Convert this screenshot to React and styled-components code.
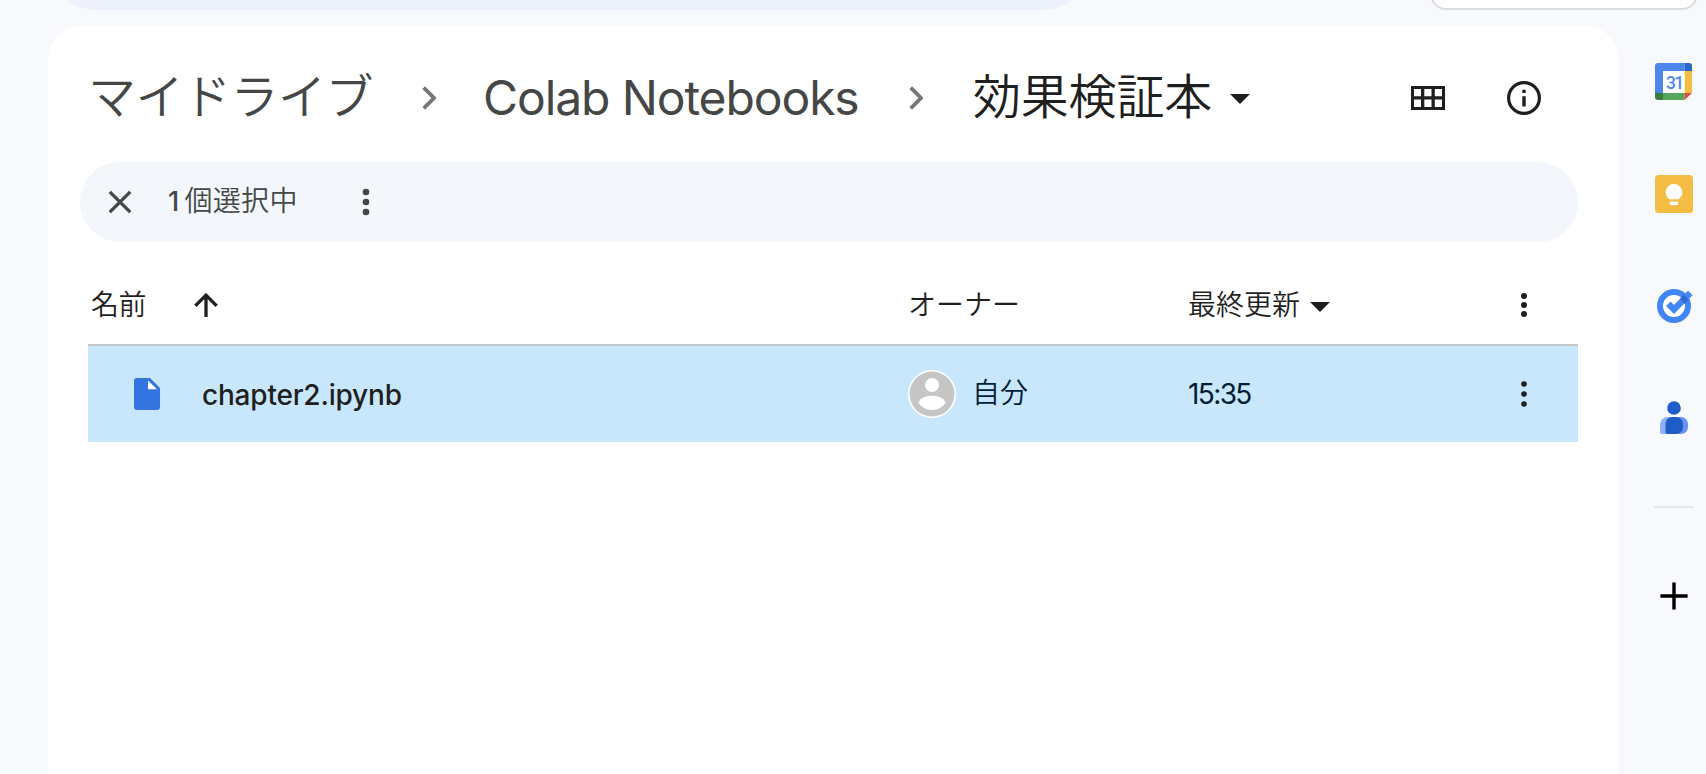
import React from "react";
import styled, { createGlobalStyle } from "styled-components";

const GlobalStyle = createGlobalStyle`
  * { box-sizing: border-box; }
  body {
    margin: 0;
    background: #f8f9fd;
    overflow: hidden;
    font-family: Inter, "Noto Sans CJK JP", sans-serif;
  }
  svg { display: block; flex: none; }
`;

const Page = styled.div`
  width: 1706px;
  height: 774px;
  display: flex;
  flex-direction: column;
  overflow: hidden;
  background: #f8f9fd;
`;

const TopBar = styled.header`
  height: 26px;
  flex: none;
  display: flex;
  align-items: flex-start;
  padding: 0 8px 0 48px;
  justify-content: space-between;
`;

const SearchBox = styled.div`
  width: 1043px;
  height: 96px;
  margin-top: -86px;
  border-radius: 48px;
  background: #edf1fb;
`;

const AccountBox = styled.div`
  width: 268px;
  height: 60px;
  margin-top: -50px;
  border-radius: 16px;
  border: 2px solid #dadce0;
  background: #fff;
`;

const Body = styled.div`
  flex: 1;
  display: flex;
  padding-left: 48px;
`;

const Panel = styled.main`
  width: 1570px;
  padding: 0 40px 0 32px;
  border-radius: 32px 32px 0 0;
  background: #fff;
`;

const Heading = styled.div`
  height: 136px;
  display: flex;
  align-items: center;
  padding: 8px 37px 0 8px;
`;

const Crumb = styled.span`
  width: ${(p) => p.$width}px;
  font-size: 48px;
  line-height: 64px;
  margin-top: ${(p) => p.$lift || 0}px;
  font-weight: ${(p) => p.$weight || 400};
  letter-spacing: ${(p) => p.$spacing || 0}px;
  white-space: nowrap;
  color: ${(p) => (p.$current ? "#1f1f1f" : "#444746")};
`;

const CrumbArrow = styled.span`
  width: 14px;
  margin: 0 ${(p) => p.$after}px 0 ${(p) => p.$before}px;
`;

const CaretSlot = styled.span`
  margin-left: ${(p) => p.$gap}px;
  padding-top: ${(p) => p.$drop}px;
`;

const Tools = styled.div`
  margin-left: auto;
  display: flex;
  align-items: center;
  gap: 62px;
`;

const SelectionBar = styled.div`
  height: 80px;
  display: flex;
  align-items: center;
  padding-left: 28px;
  border-radius: 40px;
  background: #f3f6fb;
  color: #444746;
`;

const SelectionText = styled.span`
  width: 130px;
  margin: -2px 64px 0 36px;
  font-size: 28px;
  line-height: 40px;
  font-weight: 350;
  letter-spacing: 0.3px;
  white-space: nowrap;
`;

const Count = styled.span`
  font-size: 27px;
  font-weight: 500;
  margin-right: 5px;
`;

const Table = styled.div`
  margin-left: 8px;
`;

const Row = styled.div`
  display: grid;
  grid-template-columns: 820px 280px 300px 1fr;
  align-items: center;
`;

const HeaderRow = styled(Row)`
  height: 104px;
  padding-top: 24px;
  border-bottom: 2px solid #c4c7c5;
  border-radius: 2px 2px 0 0;
  color: #1f1f1f;
`;

const FileRow = styled(Row)`
  height: 96px;
  background: #c8e7fd;
  color: #001d35;
`;

const Cell = styled.div`
  display: flex;
  align-items: center;
  padding-left: ${(p) => p.$indent || 0}px;
`;

const Label = styled.span`
  font-size: 28px;
  line-height: 40px;
  font-weight: 350;
  letter-spacing: ${(p) => p.$spacing || 0}px;
  white-space: nowrap;
`;

const SortArrow = styled.span`
  margin-left: 48px;
`;

const FileName = styled.span`
  margin: 1px 0 0 42px;
  font-size: 28px;
  line-height: 40px;
  font-weight: 500;
  letter-spacing: -0.2px;
  color: #1f1f1f;
`;

const Owner = styled(Label)`
  margin: -2px 0 0 16px;
`;

const Time = styled.span`
  font-size: 28px;
  line-height: 40px;
  letter-spacing: -1.6px;
`;

const SidePanel = styled.aside`
  width: 64px;
  margin-left: 24px;
  display: flex;
  flex-direction: column;
  align-items: center;
`;

const AppSlot = styled.div`
  width: 64px;
  height: 112px;
  display: flex;
  align-items: center;
  justify-content: center;
`;

const Divider = styled.div`
  width: 40px;
  height: 2px;
  margin: 32px 0;
  background: #e5e7ea;
`;

const Chevron = () => (
  <svg width="14" height="24" viewBox="0 0 14 24">
    <path d="M1.7 1.7 12 12 1.7 22.3" fill="none" stroke="#747775" strokeWidth="3.8" />
  </svg>
);

const Caret = () => (
  <svg width="20" height="10" viewBox="0 0 20 10">
    <path d="M0 0h20L10 10z" fill="#1f1f1f" />
  </svg>
);

const GridIcon = () => (
  <svg width="34" height="24" viewBox="0 0 34 24">
    <path
      fillRule="evenodd"
      fill="#1f1f1f"
      d="M0 0h34v24H0zM3 3v7.3h7V3zM13.3 3v7.3h7.2V3zM23.8 3v7.3H31V3zM3 13.6V21h7v-7.4zM13.3 13.6V21h7.2v-7.4zM23.8 13.6V21H31v-7.4z"
    />
  </svg>
);

const InfoIcon = () => (
  <svg width="34" height="34" viewBox="0 0 34 34">
    <circle cx="17" cy="17" r="15.4" fill="none" stroke="#1f1f1f" strokeWidth="3.2" />
    <path d="M15.3 8.7h3.4v3.4h-3.4zM15.3 15.3h3.4v10.2h-3.4z" fill="#1f1f1f" />
  </svg>
);

const CloseIcon = () => (
  <svg width="24" height="24" viewBox="0 0 24 24">
    <path d="M1.8 1.8 22.2 22.2M22.2 1.8 1.8 22.2" stroke="#444746" strokeWidth="3.3" />
  </svg>
);

const Dots = ({ color = "#1f1f1f", step = 10, r = 3 }) => (
  <svg width="8" height="30" viewBox="0 0 8 30" fill={color}>
    <circle cx="4" cy={15 - step} r={r} />
    <circle cx="4" cy="15" r={r} />
    <circle cx="4" cy={15 + step} r={r} />
  </svg>
);

const UpArrow = () => (
  <svg width="24" height="24" viewBox="0 0 24 24">
    <path d="M12 24V3M1.3 12.9 12 2.2l10.7 10.7" fill="none" stroke="#1f1f1f" strokeWidth="3.3" />
  </svg>
);

const FileIcon = () => (
  <svg width="26" height="32" viewBox="0 0 26 32">
    <path d="M3 0h13l10 10v19a3 3 0 0 1-3 3H3a3 3 0 0 1-3-3V3a3 3 0 0 1 3-3z" fill="#3474e0" />
    <path d="M14 2.6 23 11.3h-9z" fill="#fff" />
  </svg>
);

const Avatar = () => (
  <svg width="48" height="48" viewBox="0 0 48 48">
    <circle cx="24" cy="24" r="24" fill="#fff" />
    <circle cx="24" cy="24" r="22.5" fill="#c6c6c6" />
    <circle cx="24" cy="15" r="7" fill="#fff" />
    <path d="M10.5 32.5C12 28 18 25.7 24 25.7s12 2.3 13.5 6.8C35 37 30 40 24 40s-11-3-13.5-7.5z" fill="#fff" />
  </svg>
);

const CalendarText = styled.text`
  font-family: Roboto, sans-serif;
  font-size: 17.5px;
  font-weight: 500;
  letter-spacing: -1.6px;
`;

const CalendarIcon = () => (
  <svg width="38" height="38" viewBox="0 0 38 38">
    <path d="M3 0h26.5v8H8v22H0V3a3 3 0 0 1 3-3z" fill="#4f86ec" />
    <path d="M29.5 0H34a3 3 0 0 1 3 3v5h-7.5z" fill="#2c66cb" />
    <path d="M29.5 8H37v22h-7.5z" fill="#f2bd42" />
    <path d="M8 30h21.5v7H8z" fill="#58a55c" />
    <path d="M0 30h8v7H3a3 3 0 0 1-3-3z" fill="#3b7d3f" />
    <path d="M29.5 30H37l-7.5 7z" fill="#d95040" />
    <path d="M8 8h21.5v22H8z" fill="#fff" />
    <CalendarText x="10.9" y="25.5" fill="#4f86ec">31</CalendarText>
  </svg>
);

const KeepIcon = () => (
  <svg width="38" height="38" viewBox="0 0 38 38">
    <rect width="38" height="38" rx="3.5" fill="#f2bd42" />
    <path d="M19 9a8.2 8.2 0 0 1 5 14.7v.6H14v-.6A8.2 8.2 0 0 1 19 9zM14.8 26.500h8.400V30h-8.400z" fill="#fff" />
  </svg>
);

const TasksIcon = () => (
  <svg width="38" height="38" viewBox="0 0 38 38">
    <circle cx="19" cy="19" r="14" fill="#fff" stroke="#4285f4" strokeWidth="6" />
    <path
      d="M13.3 16.7 19 22.4 35.3 6.1"
      fill="none"
      stroke="#4285f4"
      strokeWidth="6.4"
    />
    <path d="M28.9 8a16 16 0 0 1 4.4 4.9l-3.800 3.800a13 13 0 0 0-4.600-4.700z" fill="#3367d6" />
  </svg>
);

const ContactsIcon = () => (
  <svg width="28" height="34" viewBox="0 0 28 34">
    <circle cx="14" cy="7" r="6.8" fill="#1f5cc8" />
    <path d="M8 16h6v17H2a2 2 0 0 1-2-2v-7a8 8 0 0 1 8-8z" fill="#8fb0fa" />
    <path d="M14 16h7a7 7 0 0 1 7 7v3a7 7 0 0 1-7 7h-7z" fill="#6993f6" />
    <path d="M12 16h4a7 7 0 0 1 7 7v3a7 7 0 0 1-7 7H7.5A2 2 0 0 1 5.5 31v-8.5A6.5 6.5 0 0 1 12 16z" fill="#1f5cc8" />
  </svg>
);

const PlusIcon = () => (
  <svg width="28" height="28" viewBox="0 0 28 28">
    <path d="M14 .4v27.2M.4 14h27.2" stroke="#000" strokeWidth="3.4" />
  </svg>
);

export default function App() {
  return (
    <Page>
      <GlobalStyle />
      <TopBar>
        <SearchBox />
        <AccountBox />
      </TopBar>
      <Body>
        <Panel>
          <Heading>
            <Crumb $width={288} $weight={350} $spacing={-0.5} $lift={-3}>マイドライブ</Crumb>
            <CrumbArrow $before={46} $after={47}><Chevron /></CrumbArrow>
            <Crumb $width={376} $spacing={-1.1} $lift={-1}>Colab Notebooks</Crumb>
            <CrumbArrow $before={50} $after={50}><Chevron /></CrumbArrow>
            <Crumb $width={240} $weight={350} $spacing={-0.2} $lift={-3} $current>効果検証本</Crumb>
            <CaretSlot $gap={17} $drop={2}><Caret /></CaretSlot>
            <Tools>
              <GridIcon />
              <InfoIcon />
            </Tools>
          </Heading>
          <SelectionBar>
            <CloseIcon />
            <SelectionText><Count>1</Count>個選択中</SelectionText>
            <Dots color="#444746" r={3.3} />
          </SelectionBar>
          <Table>
            <HeaderRow>
              <Cell $indent={3}>
                <Label $spacing={-0.5}>名前</Label>
                <SortArrow><UpArrow /></SortArrow>
              </Cell>
              <Cell><Label>オーナー</Label></Cell>
              <Cell>
                <Label>最終更新</Label>
                <CaretSlot $gap={10} $drop={4}><Caret /></CaretSlot>
              </Cell>
              <Cell $indent={32}><Dots step={9} /></Cell>
            </HeaderRow>
            <FileRow>
              <Cell $indent={46}>
                <FileIcon />
                <FileName>chapter2.ipynb</FileName>
              </Cell>
              <Cell>
                <Avatar />
                <Owner>自分</Owner>
              </Cell>
              <Cell><Time>15:35</Time></Cell>
              <Cell $indent={32}><Dots r={2.8} /></Cell>
            </FileRow>
          </Table>
        </Panel>
        <SidePanel>
          <AppSlot><CalendarIcon /></AppSlot>
          <AppSlot><KeepIcon /></AppSlot>
          <AppSlot><TasksIcon /></AppSlot>
          <AppSlot><ContactsIcon /></AppSlot>
          <Divider />
          <AppSlot><PlusIcon /></AppSlot>
        </SidePanel>
      </Body>
    </Page>
  );
}
